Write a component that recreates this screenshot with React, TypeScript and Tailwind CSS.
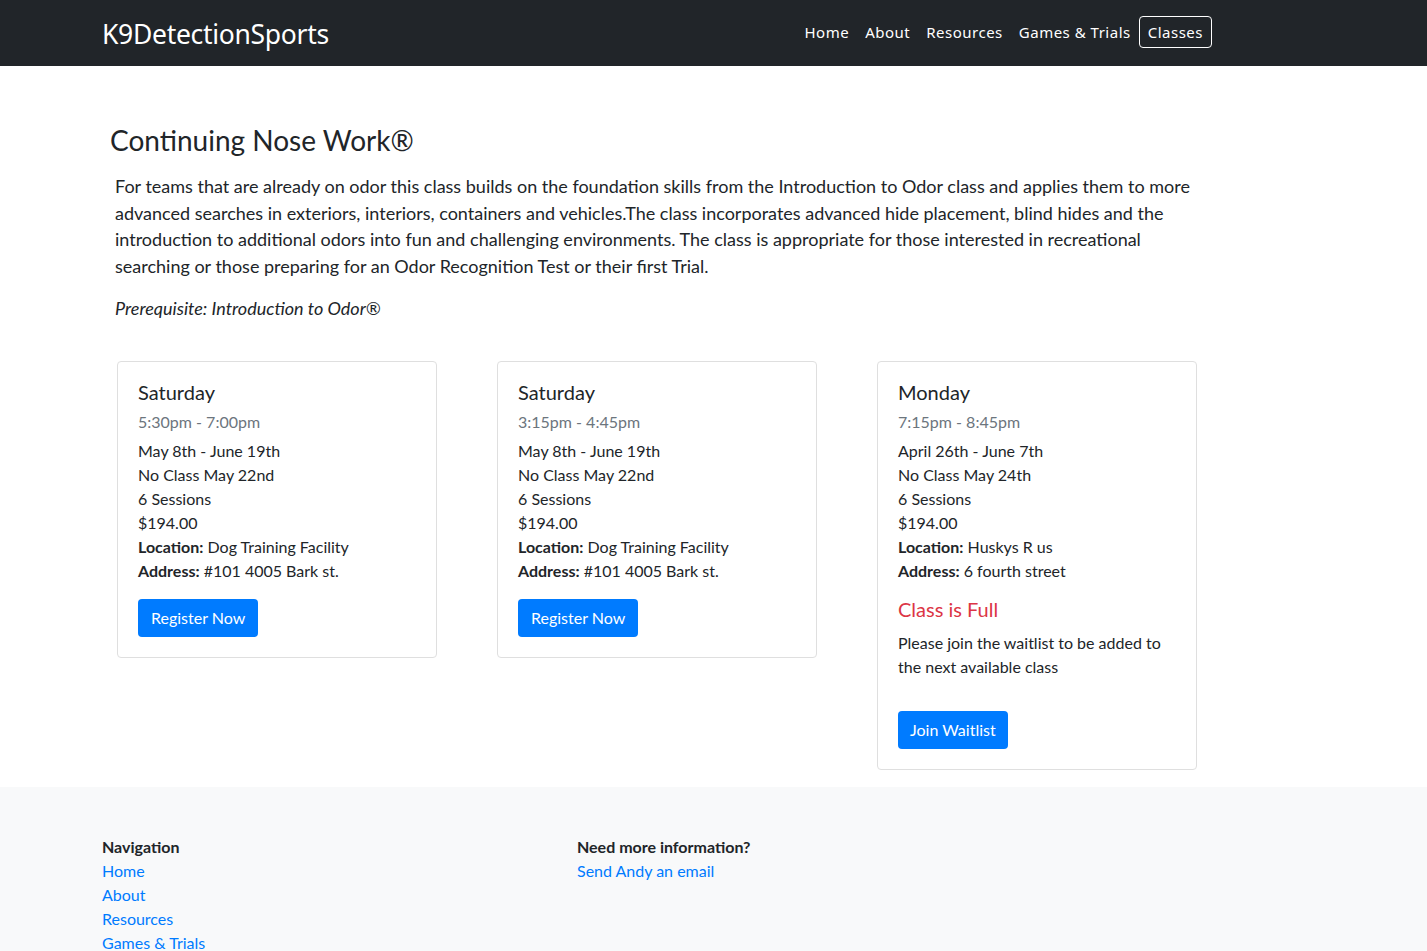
const navLinks = ['Home', 'About', 'Resources', 'Games & Trials']

interface ClassCardProps {
  day: string
  time: string
  dates: string
  noClass: string
  price: string
  location: string
  address: string
  full?: boolean
}

function ClassCard(props: ClassCardProps) {
  return (
    <div className="w-[320px] self-start rounded-[4px] border border-[#dfdfdf] bg-white px-5 pt-[16px] pb-5 text-[16px] leading-6 text-[#212529] font-['Lato','Noto_Sans',sans-serif]">
      <div className="text-[20px] leading-7 mb-[4px]">{props.day}</div>
      <div className="text-[#6c757d] mb-[5px]">{props.time}</div>
      <div>{props.dates}</div>
      <div>{props.noClass}</div>
      <div>6 Sessions</div>
      <div>{props.price}</div>
      <div><span className="font-bold">Location:</span> {props.location}</div>
      <div><span className="font-bold">Address:</span> {props.address}</div>
      {props.full ? (
        <>
          <div className="mt-[12px] text-[20px] leading-7 text-[#dc3545]">Class is Full</div>
          <p className="mt-[8px] leading-6">Please join the waitlist to be added to the next available class</p>
          <button className="mt-[32px] rounded-[4px] bg-[#007bff] px-3 h-[38px] text-white">Join Waitlist</button>
        </>
      ) : (
        <button className="mt-[16px] rounded-[4px] bg-[#007bff] px-[13px] h-[38px] text-white">Register Now</button>
      )}
    </div>
  )
}

export default function App() {
  return (
    <div className="min-h-screen bg-white font-['Lato','Noto_Sans',sans-serif] text-[#212529]">
      {/* Navbar */}
      <nav className="h-[66px] bg-[#212529]">
        <div className="h-full w-[1212px] pl-[102px] flex items-center justify-between">
          <a className="mt-[3px] text-white text-[26.5px] tracking-[-0.3px] font-['Noto_Sans',sans-serif]">K9DetectionSports</a>
          <div className="-mt-[2px] flex items-center text-[15px] text-white tracking-[0.5px] font-['Noto_Sans',sans-serif]">
            {navLinks.map((l) => (
              <a key={l} className="px-2">{l}</a>
            ))}
            <a className="px-2 h-[32px] flex items-center border border-white rounded-[4px]">Classes</a>
          </div>
        </div>
      </nav>

      {/* Main */}
      <main className="pt-[54px] pb-[17px]">
        <h1 className="pl-[110px] text-[28px] leading-10 text-[#212529]">Continuing Nose Work®</h1>
        <div className="pl-[115px] mt-[13px] w-[1200px]">
          <p className="text-[18px] leading-[26.7px]">
            For teams that are already on odor this class builds on the foundation skills from the Introduction to Odor class and applies them to more advanced searches in exteriors, interiors, containers and vehicles.The class incorporates advanced hide placement, blind hides and the introduction to additional odors into fun and challenging environments. The class is appropriate for those interested in recreational searching or those preparing for an Odor Recognition Test or their first Trial.
          </p>
          <p className="mt-[15px] text-[18px] italic">Prerequisite: Introduction to Odor®</p>
        </div>

        <div className="mt-[39px] pl-[117px] flex gap-[60px]">
          <ClassCard day="Saturday" time="5:30pm - 7:00pm" dates="May 8th - June 19th" noClass="No Class May 22nd" price="$194.00" location="Dog Training Facility" address="#101 4005 Bark st." />
          <ClassCard day="Saturday" time="3:15pm - 4:45pm" dates="May 8th - June 19th" noClass="No Class May 22nd" price="$194.00" location="Dog Training Facility" address="#101 4005 Bark st." />
          <ClassCard day="Monday" time="7:15pm - 8:45pm" dates="April 26th - June 7th" noClass="No Class May 24th" price="$194.00" location="Huskys R us" address="6 fourth street" full />
        </div>
      </main>

      {/* Footer */}
      <footer className="bg-[#f8f9fa] pt-[48px] pb-10 pl-[102px] flex text-[16px] leading-6">
        <div className="w-[475px]">
          <div className="font-bold">Navigation</div>
          {navLinks.map((l) => (
            <a key={l} className="block text-[#007bff]">{l}</a>
          ))}
        </div>
        <div>
          <div className="font-bold">Need more information?</div>
          <a className="block text-[#007bff]">Send Andy an email</a>
        </div>
      </footer>
    </div>
  )
}
